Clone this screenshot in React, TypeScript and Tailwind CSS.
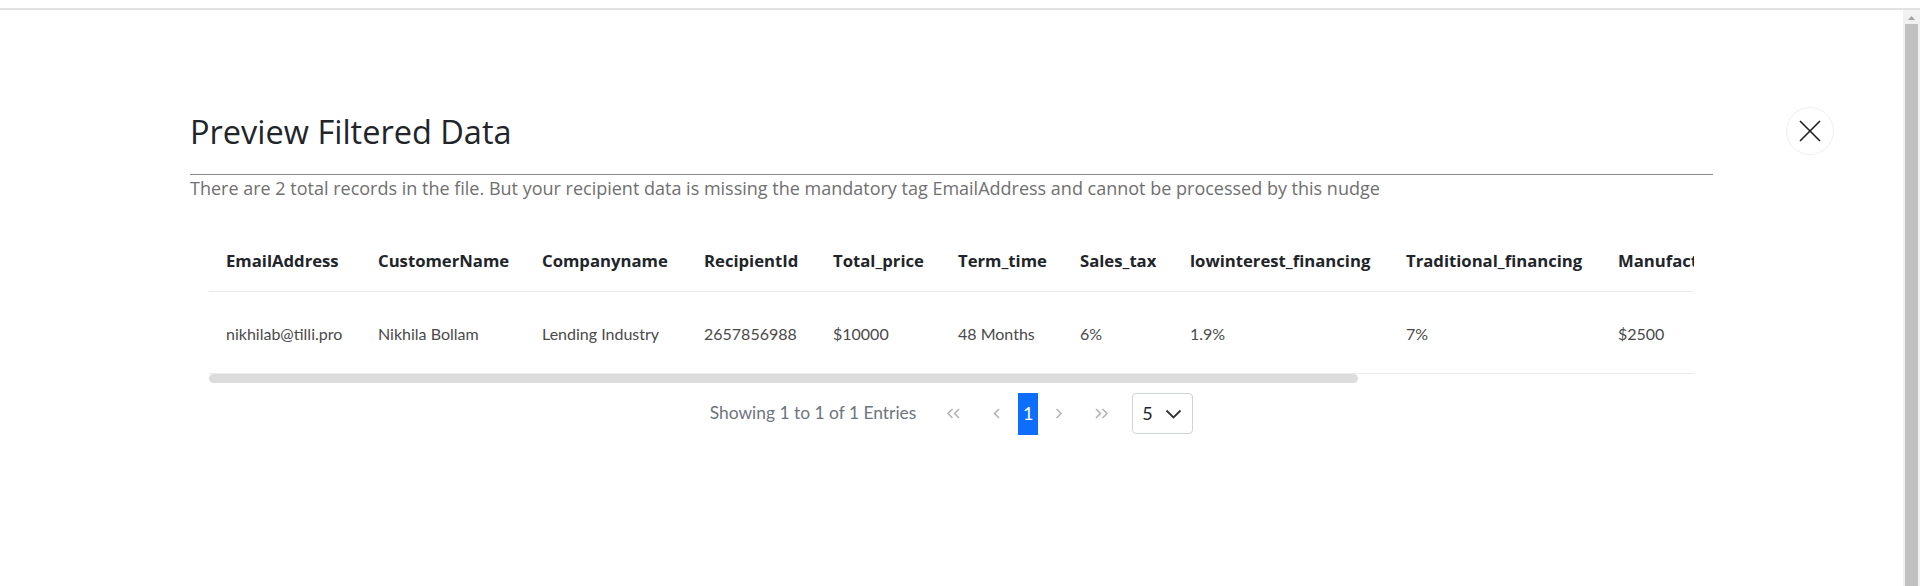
import React from 'react'

const columns = [
  { label: 'EmailAddress', width: 'w-[152px]' },
  { label: 'CustomerName', width: 'w-[164px]' },
  { label: 'Companyname', width: 'w-[162px]' },
  { label: 'RecipientId', width: 'w-[129px]' },
  { label: 'Total_price', width: 'w-[125px]' },
  { label: 'Term_time', width: 'w-[122px]' },
  { label: 'Sales_tax', width: 'w-[110px]' },
  { label: 'lowinterest_financing', width: 'w-[216px]' },
  { label: 'Traditional_financing', width: 'w-[212px]' },
  { label: 'Manufacturer_rebate', width: 'w-[200px]' },
  { label: 'Monthly_payment', width: 'w-[325px]' },
]

const rows = [
  [
    'nikhilab@tilli.pro',
    'Nikhila Bollam',
    'Lending Industry',
    '2657856988',
    '$10000',
    '48 Months',
    '6%',
    '1.9%',
    '7%',
    '$2500',
    '$158',
  ],
]

function Chevron({ dir, double = false }: { dir: 'left' | 'right'; double?: boolean }) {
  const single = dir === 'left' ? 'M6 1 L1.5 5.5 L6 10' : 'M1.5 1 L6 5.5 L1.5 10'
  if (!double) {
    return (
      <svg width="8" height="11" viewBox="0 0 8 11" fill="none" stroke="#b4b4b4" strokeWidth="1.6">
        <path d={single} />
      </svg>
    )
  }
  return (
    <svg width="15" height="11" viewBox="0 0 15 11" fill="none" stroke="#b4b4b4" strokeWidth="1.6">
      {dir === 'left' ? (
        <>
          <path d="M6.5 1 L2 5.5 L6.5 10" />
          <path d="M13 1 L8.5 5.5 L13 10" />
        </>
      ) : (
        <>
          <path d="M2 1 L6.5 5.5 L2 10" />
          <path d="M8.5 1 L13 5.5 L8.5 10" />
        </>
      )}
    </svg>
  )
}

export default function App() {
  return (
    <div className="h-[586px] w-[1920px] overflow-hidden bg-white flex flex-col">
      <div className="h-[8px] bg-white" />
      <div className="h-[2px] bg-[#e2e2e2]" />
      <div className="flex flex-1 min-h-0">
        {/* Modal */}
        <main className="flex-1 min-w-0 pt-[103px] px-[190px]">
          <div className="relative">
            <h2 className="font-['Open_Sans',sans-serif] text-[32.5px] leading-[38px] font-normal text-[#212529]">
              Preview Filtered Data
            </h2>
            <button className="absolute right-[-121px] top-[-6px] w-[48px] h-[48px] rounded-full border border-[#efefef] flex items-center justify-center">
              <svg width="22" height="22" viewBox="0 0 22 22" stroke="#1c1c1c" strokeWidth="1.6" fill="none">
                <path d="M1 1 L21 21 M21 1 L1 21" />
              </svg>
            </button>
          </div>

          <div className="mt-[23px] h-px bg-[#8a8a8a]" />
          <p className="font-['Open_Sans',sans-serif] text-[18px] leading-[26px] text-[#707070]">
            There are 2 total records in the file. But your recipient data is missing the mandatory tag EmailAddress and
            cannot be processed by this nudge
          </p>

          <div className="mx-[19px] mt-[30px] font-['Lato',sans-serif]">
            <div className="overflow-hidden">
              <table className="table-fixed w-[1917px] border-collapse text-left">
                <thead>
                  <tr className="border-b border-[#ebebeb]">
                    {columns.map((c) => (
                      <th
                        key={c.label}
                        className={`${c.width} h-[60px] px-[17px] font-['Open_Sans',sans-serif] text-[16.7px] font-bold text-[#212529] whitespace-nowrap align-middle`}
                      >
                        {c.label}
                      </th>
                    ))}
                  </tr>
                </thead>
                <tbody>
                  {rows.map((r, i) => (
                    <tr key={i} className="border-b border-[#ebebeb]">
                      {r.map((v, j) => (
                        <td key={j} className="h-[82px] px-[17px] pt-[3px] text-[16px] text-[#4a4a4a] whitespace-nowrap align-middle">
                          {v}
                        </td>
                      ))}
                    </tr>
                  ))}
                </tbody>
              </table>
            </div>
            {/* horizontal scroll */}
            <div className="h-[9px]">
              <div className="h-[9px] w-[1149px] rounded-full bg-[#dcdcdc]" />
            </div>

            {/* Pagination */}
            <div className="mt-[10px] flex items-center justify-center h-[42px]">
              <span className="text-[17.4px] text-[#6c757d]">Showing 1 to 1 of 1 Entries</span>
              <span className="ml-[30px] flex items-center"><Chevron dir="left" double /></span>
              <span className="ml-[32px] flex items-center"><Chevron dir="left" /></span>
              <span className="ml-[17px] w-[20px] h-[42px] bg-[#0d6efd] text-white text-[18px] flex items-center justify-center">
                1
              </span>
              <span className="ml-[17px] flex items-center"><Chevron dir="right" /></span>
              <span className="ml-[31px] flex items-center"><Chevron dir="right" double /></span>
              <div className="ml-[23px] w-[61px] h-[41px] border border-[#ced4da] rounded-[4px] flex items-center pl-[9px] pr-[10px] justify-between">
                <span className="text-[18px] text-[#212529]">5</span>
                <svg width="17" height="10" viewBox="0 0 17 10" fill="none" stroke="#333" strokeWidth="1.8">
                  <path d="M1.5 1.5 L8.5 8.5 L15.5 1.5" />
                </svg>
              </div>
            </div>
          </div>
        </main>

        {/* Page scrollbar */}
        <aside className="w-[17px] shrink-0 bg-[#f1f1f1] flex flex-col items-center">
          <div className="h-[14px] w-full flex items-center justify-center pt-[2px]">
            <svg width="7" height="4" viewBox="0 0 7 4" fill="#a3a3a3">
              <path d="M3.5 0 L7 4 L0 4 Z" />
            </svg>
          </div>
          <div className="flex-1 w-[13px] bg-[#c1c1c1]" />
        </aside>
      </div>
    </div>
  )
}
